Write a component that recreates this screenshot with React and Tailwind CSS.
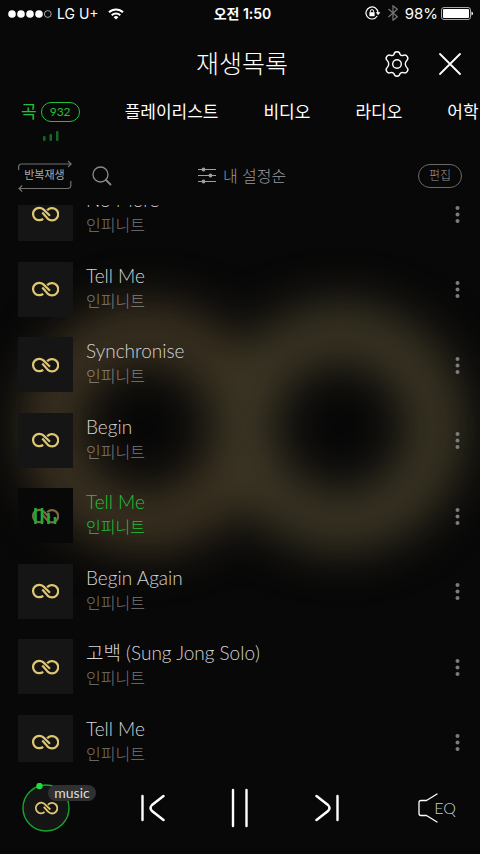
import { useState } from 'react';

const tracks = [
  { id: 1, title: 'No More', artist: '인피니트' },
  { id: 2, title: 'Tell Me', artist: '인피니트' },
  { id: 3, title: 'Synchronise', artist: '인피니트' },
  { id: 4, title: 'Begin', artist: '인피니트' },
  { id: 5, title: 'Tell Me', artist: '인피니트' },
  { id: 6, title: 'Begin Again', artist: '인피니트' },
  { id: 7, title: '고백 (Sung Jong Solo)', artist: '인피니트' },
  { id: 8, title: 'Tell Me', artist: '인피니트' },
];

const tabs = ['플레이리스트', '비디오', '라디오', '어학'];

export default function App() {
  const [playingId, setPlayingId] = useState(5);

  return (
    <div className="relative isolate flex h-dvh flex-col overflow-hidden bg-[#080808] font-['Lato','Noto_Sans_CJK_KR',sans-serif] text-white">
      <Backdrop />
      <StatusBar />

      <header className="grid h-[74px] shrink-0 grid-cols-[1fr_auto_1fr] items-center">
        <h1 className="col-start-2 pl-1 text-[25px] font-light">재생목록</h1>
        <div className="flex items-center justify-end gap-7 pr-[18px]">
          <button type="button" aria-label="설정"><GearIcon /></button>
          <button type="button" aria-label="닫기">
            <svg className="block" width="24" height="24" viewBox="0 0 24 24" fill="none" stroke="#fff" strokeWidth="1.8" strokeLinecap="round">
              <path d="M2 2 22 22M22 2 2 22" />
            </svg>
          </button>
        </div>
      </header>

      <Tabs />
      <Toolbar />

      <main className="min-h-0 flex-1 overflow-hidden">
        <ul className="-mt-[19px] flex h-[584px] flex-col justify-between">
          {tracks.map((t) => (
            <TrackRow key={t.id} track={t} playing={t.id === playingId} onPlay={() => setPlayingId(t.id)} />
          ))}
        </ul>
      </main>

      <Player />
    </div>
  );
}

function Backdrop() {
  return (
    <svg className="absolute inset-0 -z-10 h-full w-full" viewBox="0 0 480 854" preserveAspectRatio="xMidYMid slice" aria-hidden="true">
      <defs>
        <filter id="soft" x="-50%" y="-60%" width="200%" height="220%" colorInterpolationFilters="sRGB">
          <feGaussianBlur stdDeviation="24" />
        </filter>
      </defs>
      <g filter="url(#soft)" fill="none" strokeWidth="58">
        <circle cx="146" cy="427" r="95" stroke="#3e3422" />
        <circle cx="341" cy="427" r="95" stroke="#3d3725" />
      </g>
    </svg>
  );
}

function StatusBar() {
  return (
    <div className="grid h-[27px] shrink-0 grid-cols-[1fr_auto_1fr] items-center pr-[7px] pl-2 font-['Inter','Noto_Sans_CJK_KR',sans-serif] text-sm">
      <div className="flex items-center gap-[5px]">
        <svg width="44" height="8" viewBox="0 0 44 8" fill="#fff">
          <circle cx="4" cy="4" r="3.8" />
          <circle cx="13" cy="4" r="3.8" />
          <circle cx="22" cy="4" r="3.8" />
          <circle cx="31" cy="4" r="3.8" />
          <circle cx="39.800" cy="4" r="3.4" fill="none" stroke="#ccc" strokeWidth="0.8" />
        </svg>
        <span>LG U+</span>
        <svg className="ml-1" width="16" height="12" viewBox="0 0 16 12" fill="none" stroke="#fff" strokeWidth="2">
          <path d="M1 4.300a10 10 0 0 1 14 0" />
          <path d="M3.700 7.200a6.200 6.200 0 0 1 8.600 0" />
          <path d="M8 11.600 5.600 9.300a3.400 3.400 0 0 1 4.800 0Z" fill="#fff" stroke="none" />
        </svg>
      </div>
      <span className="pl-1 font-semibold">오전 1:50</span>
      <div className="flex items-center justify-end">
        <svg width="16" height="14" viewBox="0 0 16 14" fill="none" stroke="#fff">
          <path d="M12.200 10A6 6 0 1 1 13 7" strokeWidth="1.200" />
          <path d="m10.800 6.300 4.600 0-2.300 2.900Z" fill="#fff" stroke="none" />
          <rect x="4.400" y="6.200" width="5.200" height="4" fill="#fff" stroke="none" />
          <path d="M5.400 6.500V5.200a1.600 1.600 0 0 1 3.200 0v1.300" />
        </svg>
        <svg className="ml-[7px]" width="10" height="16" viewBox="0 0 10 16" fill="none" stroke="#777" strokeWidth="1.200">
          <path d="M0.500 4 9.300 11.800 5 15.200V0.800L9.300 4.200 0.500 12" />
        </svg>
        <span className="ml-[7px] text-[15px]">98%</span>
        <svg className="ml-[3px]" width="32" height="13" viewBox="0 0 32 13">
          <rect x="0.500" y="0.500" width="29" height="12" rx="2.500" fill="none" stroke="#aaa" />
          <rect x="2" y="2" width="26" height="9" rx="1" fill="#fff" />
          <path d="M30.500 4.500q1.500 .5 1.500 2t-1.500 2Z" fill="#fff" />
        </svg>
      </div>
    </div>
  );
}

function Tabs() {
  return (
    <nav className="h-[45px] shrink-0 overflow-hidden pl-[21px]">
      <div className="flex h-[22px] items-center gap-[45px] text-[17px] whitespace-nowrap">
        <a href="#songs" className="flex items-center gap-1 text-[#22c03a]">
          곡
          <span className="flex h-5 w-[39px] items-center justify-center rounded-full border border-[#22c03a] text-xs">932</span>
        </a>
        {tabs.map((name) => (
          <a key={name} href={`#${name}`}>{name}</a>
        ))}
      </div>
      <svg className="mt-[7px] ml-[22px]" width="16" height="11" viewBox="0 0 16 11" fill="#136a24">
        <rect x="0" y="6" width="2.500" height="5" rx="1" />
        <rect x="6.500" y="4" width="2.500" height="7" rx="1" />
        <rect x="13" y="1" width="2.500" height="10" rx="1" />
      </svg>
    </nav>
  );
}

function Toolbar() {
  return (
    <div className="grid h-[59px] shrink-0 grid-cols-[1fr_auto_1fr] items-center px-[18px] font-light text-[#9a9a9a]">
      <div className="flex items-center gap-[21px]">
        <button type="button" className="relative h-[32px] w-[53px] text-[11px] font-normal text-[#aaa]">
          <svg className="absolute inset-0" width="54" height="32" viewBox="0 0 54 32" fill="none" stroke="#707070" strokeWidth="1.200">
            <path d="M0.600 10V7a3 3 0 0 1 3-3H53M50 1l3.200 3L50 7" />
            <path d="M52.800 21v4.500a3 3 0 0 1-3 3H1M4.200 25.500 1 28.500l3.200 3" />
          </svg>
          반복재생
        </button>
        <button type="button" aria-label="검색">
          <svg className="block" width="20" height="20" viewBox="0 0 20 20" fill="none" stroke="#8a8a8a" strokeLinecap="round">
            <circle cx="8.500" cy="8.500" r="7.500" strokeWidth="1.300" />
            <path d="m14 14 4.500 4.500" strokeWidth="1.800" />
          </svg>
        </button>
      </div>
      <button type="button" className="flex items-center gap-[7px] pl-1 text-base">
        <svg width="18" height="17" viewBox="0 0 18 17" fill="#a0a0a0" stroke="#a0a0a0" strokeWidth="1.200">
          <path d="M0 2.500h18M0 8.500h18M0 14.500h18" />
          <circle cx="5.500" cy="2.500" r="1.300" />
          <circle cx="12.500" cy="8.500" r="1.300" />
          <circle cx="5.500" cy="14.500" r="1.300" />
        </svg>
        내 설정순
      </button>
      <button type="button" className="h-6 w-11 justify-self-end rounded-full border border-[#6a6a6a] text-xs">편집</button>
    </div>
  );
}

function TrackRow({ track, playing, onPlay }) {
  return (
    <li className="flex h-[55px] shrink-0 items-center pr-[15px] pl-[18px]">
      <button type="button" onClick={onPlay} className="flex flex-1 items-center gap-[13px] text-left">
        <span className={playing ? 'flex size-[55px] items-center justify-center bg-[#080808]' : 'flex size-[55px] items-center justify-center bg-[#151516]'}>
          <InfinityMark playing={playing} />
        </span>
        <span className={playing ? 'pb-[3px] text-[#22c03a]' : 'pb-[3px] text-[#d4d4d4]'}>
          <span className="block text-[19px] leading-[26px] font-light">{track.title}</span>
          <span className={playing ? 'block text-base leading-6 font-light' : 'block text-base leading-6 font-light text-white/45'}>{track.artist}</span>
        </span>
      </button>
      <button type="button" aria-label="더보기">
        <svg className="block" width="15" height="18" viewBox="0 0 15 18" fill="#7c7c7c">
          <circle cx="7.500" cy="3" r="2" />
          <circle cx="7.500" cy="9.500" r="2" />
          <circle cx="7.500" cy="16" r="2" />
        </svg>
      </button>
    </li>
  );
}

function InfinityMark({ playing, small }) {
  return (
    <svg width={small ? 23 : 27} height={small ? 14 : 16} viewBox="0 0 27 16" fill="none">
      <g stroke={playing ? '#7a6a40' : '#dfc673'} strokeWidth="2.200">
        <path d="M11.200 12.800A6.200 6.200 0 1 1 11.400 3.400L18 9.800" />
        <path d="M15.200 4.300A6.200 6.200 0 1 1 15.600 12.600L10.300 6.600" />
      </g>
      {playing && (
        <path d="M3.500 0v16M10 0v16M16.500 5v11M23 9v7" stroke="#1fae35" strokeWidth="2.600" />
      )}
    </svg>
  );
}

function Player() {
  return (
    <footer className="grid h-[92px] shrink-0 grid-cols-[1fr_auto_auto_auto_1fr] items-center gap-x-[66px] px-[22px]">
      <button type="button" aria-label="music" className="relative size-[50px]">
        <svg className="absolute inset-0" width="50" height="50" viewBox="0 0 50 50" fill="none">
          <circle cx="24" cy="25" r="23" fill="#151516" stroke="#16a62f" strokeWidth="1.400" />
          <circle cx="17.500" cy="3" r="3.200" fill="#20dc40" />
        </svg>
        <span className="relative flex h-full items-center justify-center pr-[2px]"><InfinityMark small /></span>
        <span className="absolute top-[2px] left-[26px] h-4 w-[48px] rounded-full bg-[#303030] text-sm leading-4 text-[#ddd]">music</span>
      </button>
      <button type="button" aria-label="이전 곡">
        <svg className="block" width="24" height="28" viewBox="0 0 24 28" fill="none" stroke="#fff" strokeWidth="2.400" strokeLinecap="round">
          <path d="M1.500 2v24M22.500 2 11 11Q8 14 11 17L22.500 26" />
        </svg>
      </button>
      <button type="button" aria-label="일시정지">
        <svg className="block" width="18" height="40" viewBox="0 0 18 40" fill="none" stroke="#fff" strokeWidth="2.400" strokeLinecap="round">
          <path d="M2 2v36M15.500 2v36" />
        </svg>
      </button>
      <button type="button" aria-label="다음 곡">
        <svg className="block" width="24" height="28" viewBox="0 0 24 28" fill="none" stroke="#fff" strokeWidth="2.400" strokeLinecap="round">
          <path d="M22.500 2v24M1.500 2 13 11Q16 14 13 17L1.500 26" />
        </svg>
      </button>
      <button type="button" className="flex items-center justify-self-end pr-[2px] text-base font-light text-[#ccc]">
        <svg width="20" height="30" viewBox="0 0 20 30" fill="none" stroke="#fff" strokeWidth="1.300" strokeLinecap="round" strokeLinejoin="round">
          <path d="M19 1 8.500 7.500H3Q1 7.500 1 9.500V20.500Q1 22.500 3 22.500H8.500L19 29" />
        </svg>
        <span className="-ml-1">EQ</span>
      </button>
    </footer>
  );
}

function GearIcon() {
  return (
    <svg className="block" width="26" height="26" viewBox="0 0 26 26" fill="none" stroke="#fff" strokeWidth="1.400" strokeLinejoin="round">
      <path d="M10 3.300Q10.300 .8 13 .8T16 3.300Q17.200 5 19.400 4.300Q22 3.400 23.300 5.700T23 9.300Q21.300 10.800 21.300 13T23 16.700Q24.700 18 23.300 20.300T19.400 21.700Q17.200 21 16 22.700Q15.700 25.200 13 25.200T10 22.700Q8.800 21 6.600 21.700Q4 22.600 2.700 20.300T3 16.700Q4.700 15.200 4.700 13T3 9.300Q1.300 8 2.700 5.700T6.600 4.300Q8.800 5 10 3.300Z" />
      <circle cx="13" cy="13" r="4.300" />
    </svg>
  );
}
